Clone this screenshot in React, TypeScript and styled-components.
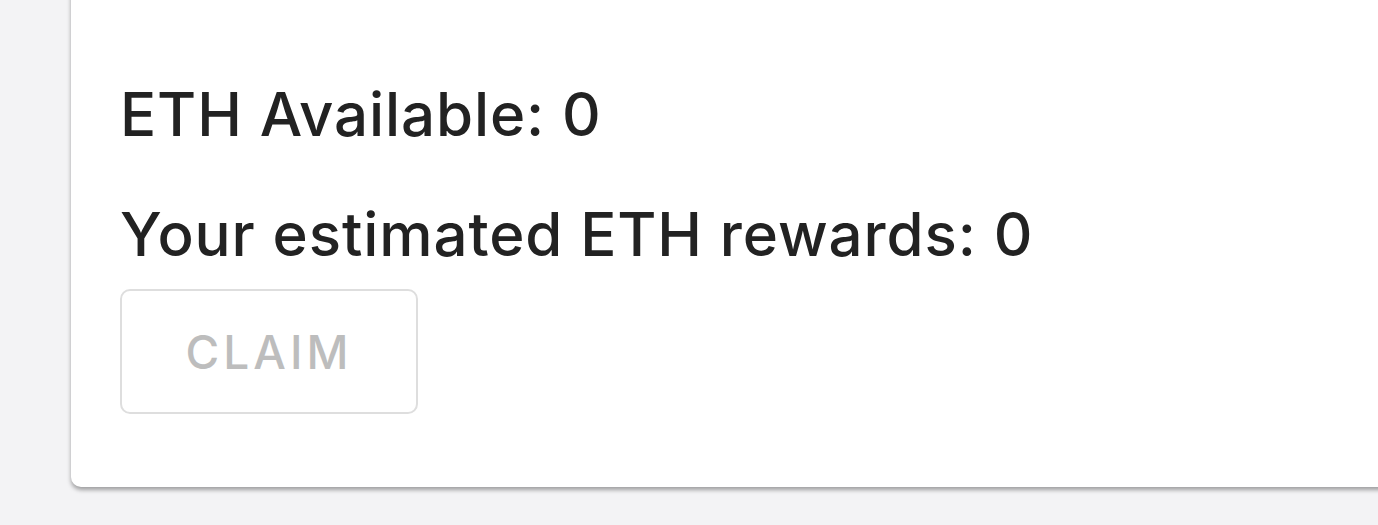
import styled, { createGlobalStyle } from "styled-components";

const GlobalStyle = createGlobalStyle`
  html, body {
    margin: 0;
    padding: 0;
    background: #f3f3f5;
    font-family: Inter, "Noto Sans", sans-serif;
  }
`;

const Page = styled.main`
  height: 525px;
  overflow: hidden;
  padding-left: 71px;
`;

const Card = styled.section`
  margin-top: -20px;
  margin-right: -40px;
  height: 507px;
  box-sizing: border-box;
  background: white;
  border-radius: 0 0 10px 10px;
  box-shadow: 0px 3px 4px rgba(0, 0, 0, 0.35);
  padding: 94px 0 0 49px;
  display: flex;
  flex-direction: column;
  align-items: flex-start;
`;

const Stat = styled.p`
  margin: 0 0 40px;
  font-size: 60px;
  line-height: 80px;
  font-weight: 500;
  letter-spacing: 0.9px;
  color: #222;
`;

const ClaimButton = styled.button`
  margin-top: -25px;
  width: 298px;
  height: 125px;
  background: white;
  border: 2.5px solid #dedede;
  border-radius: 10px;
  color: #bdbdbd;
  font-family: inherit;
  font-size: 46px;
  font-weight: 500;
  letter-spacing: 4px;
  cursor: not-allowed;
`;

const App = () => {
  return (
    <>
      <GlobalStyle />
      <Page>
        <Card>
          <Stat>ETH Available: 0</Stat>
          <Stat>Your estimated ETH rewards: 0</Stat>
          <ClaimButton disabled>CLAIM</ClaimButton>
        </Card>
      </Page>
    </>
  );
};

export default App;
